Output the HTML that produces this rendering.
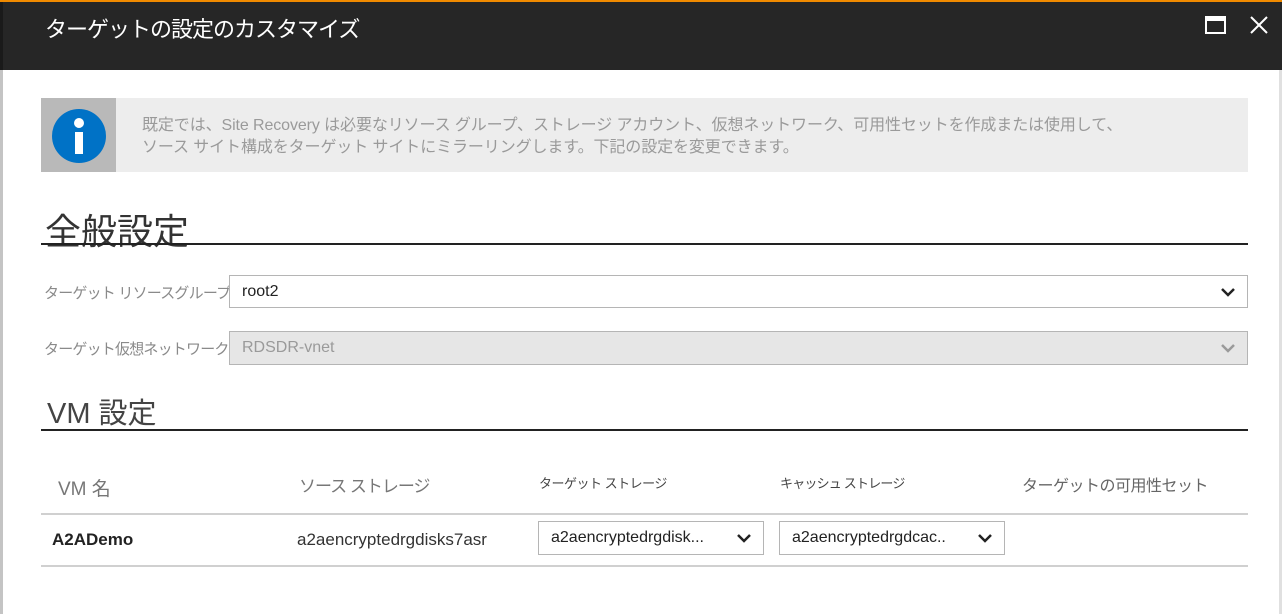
<!DOCTYPE html>
<html><head><meta charset="utf-8"><style>
*{margin:0;padding:0;box-sizing:border-box}
body{width:1282px;height:614px;background:#fff;font-family:"Liberation Sans","Noto Sans CJK JP",sans-serif;position:relative;overflow:hidden}
.a{position:absolute;white-space:nowrap}
.lbl{color:#8a8a8a;font-size:15px;letter-spacing:-0.8px}
.sel{position:absolute;border:1px solid #b5b5b5;background:#fff;font-size:16px;color:#222;padding-left:12px;display:flex;align-items:center}
.chev{position:absolute;right:12px;top:50%;margin-top:-5px}
</style></head><body>
<div class="a" style="left:0;top:0;width:1282px;height:2px;background:#f08a00"></div>
<div class="a" style="left:0;top:2px;width:1282px;height:68px;background:#262626"></div>
<div class="a" style="left:0;top:2px;width:3px;height:68px;background:#1a1a1a"></div>
<div class="a" style="left:45px;top:12px;color:#fff;font-size:22px;letter-spacing:-1px">ターゲットの設定のカスタマイズ</div>
<div class="a" style="left:1205px;top:16px;width:21px;height:18px;border:2px solid #fff;border-top-width:5px"></div>
<svg class="a" style="left:1250px;top:16px" width="18" height="18"><path d="M1 1L17 17M17 1L1 17" stroke="#fff" stroke-width="2"/></svg>
<div class="a" style="left:0;top:70px;width:3px;height:544px;background:#c4c4c4"></div>
<div class="a" style="left:1279px;top:70px;width:3px;height:544px;background:#e0e0e0"></div>
<div class="a" style="left:41px;top:98px;width:1207px;height:74px;background:#ededed"></div>
<div class="a" style="left:41px;top:98px;width:75px;height:74px;background:#b9b9b9"></div>
<div class="a" style="left:52px;top:109px;width:54px;height:54px;border-radius:50%;background:#0072c6"></div>
<div class="a" style="left:74px;top:118px;width:10px;height:10px;border-radius:50%;background:#fff"></div>
<div class="a" style="left:75px;top:132px;width:8px;height:22px;background:#fff"></div>
<div class="a" style="left:142px;top:115px;color:#9a9a9a;font-size:16px;line-height:22px;letter-spacing:-0.1px">既定では、Site Recovery は必要なリソース グループ、ストレージ アカウント、仮想ネットワーク、可用性セットを作成または使用して、<br>ソース サイト構成をターゲット サイトにミラーリングします。下記の設定を変更できます。</div>
<div class="a" style="left:45px;top:203px;font-size:36px;color:#333">全般設定</div>
<div class="a" style="left:41px;top:243px;width:1207px;height:2px;background:#222"></div>
<div class="a lbl" style="left:44px;top:282px">ターゲット リソースグループ</div>
<div class="sel" style="left:229px;top:275px;width:1019px;height:33px">root2<svg class="chev" width="14" height="10"><path d="M1 2L7 8L13 2" stroke="#222" stroke-width="2.5" fill="none"/></svg></div>
<div class="a lbl" style="left:44px;top:338px">ターゲット仮想ネットワーク</div>
<div class="sel" style="left:229px;top:331px;width:1019px;height:34px;background:#e6e6e6;color:#9a9a9a">RDSDR-vnet<svg class="chev" width="14" height="10"><path d="M1 2L7 8L13 2" stroke="#9a9a9a" stroke-width="2.5" fill="none"/></svg></div>
<div class="a" style="left:47px;top:390px;font-size:29px;color:#444">VM 設定</div>
<div class="a" style="left:41px;top:429px;width:1207px;height:2px;background:#222"></div>
<div class="a" style="left:58px;top:474px;font-size:19px;color:#777">VM 名</div>
<div class="a" style="left:299px;top:472px;font-size:17px;color:#777;letter-spacing:-1px">ソース ストレージ</div>
<div class="a" style="left:539px;top:473px;font-size:13px;color:#444;letter-spacing:-0.5px">ターゲット ストレージ</div>
<div class="a" style="left:780px;top:473px;font-size:13px;color:#444;letter-spacing:-0.8px">キャッシュ ストレージ</div>
<div class="a" style="left:1022px;top:472px;font-size:16px;color:#666;letter-spacing:-0.5px">ターゲットの可用性セット</div>
<div class="a" style="left:41px;top:513px;width:1207px;height:2px;background:#d0d0d0"></div>
<div class="a" style="left:52px;top:530px;font-size:17px;font-weight:bold;color:#222">A2ADemo</div>
<div class="a" style="left:297px;top:530px;font-size:17px;color:#333">a2aencryptedrgdisks7asr</div>
<div class="sel" style="left:538px;top:521px;width:226px;height:34px">a2aencryptedrgdisk...<svg class="chev" width="14" height="10"><path d="M1 2L7 8L13 2" stroke="#222" stroke-width="2.5" fill="none"/></svg></div>
<div class="sel" style="left:779px;top:521px;width:226px;height:34px">a2aencryptedrgdcac..<svg class="chev" width="14" height="10"><path d="M1 2L7 8L13 2" stroke="#222" stroke-width="2.5" fill="none"/></svg></div>
<div class="a" style="left:41px;top:565px;width:1207px;height:2px;background:#d0d0d0"></div>
</body></html>
